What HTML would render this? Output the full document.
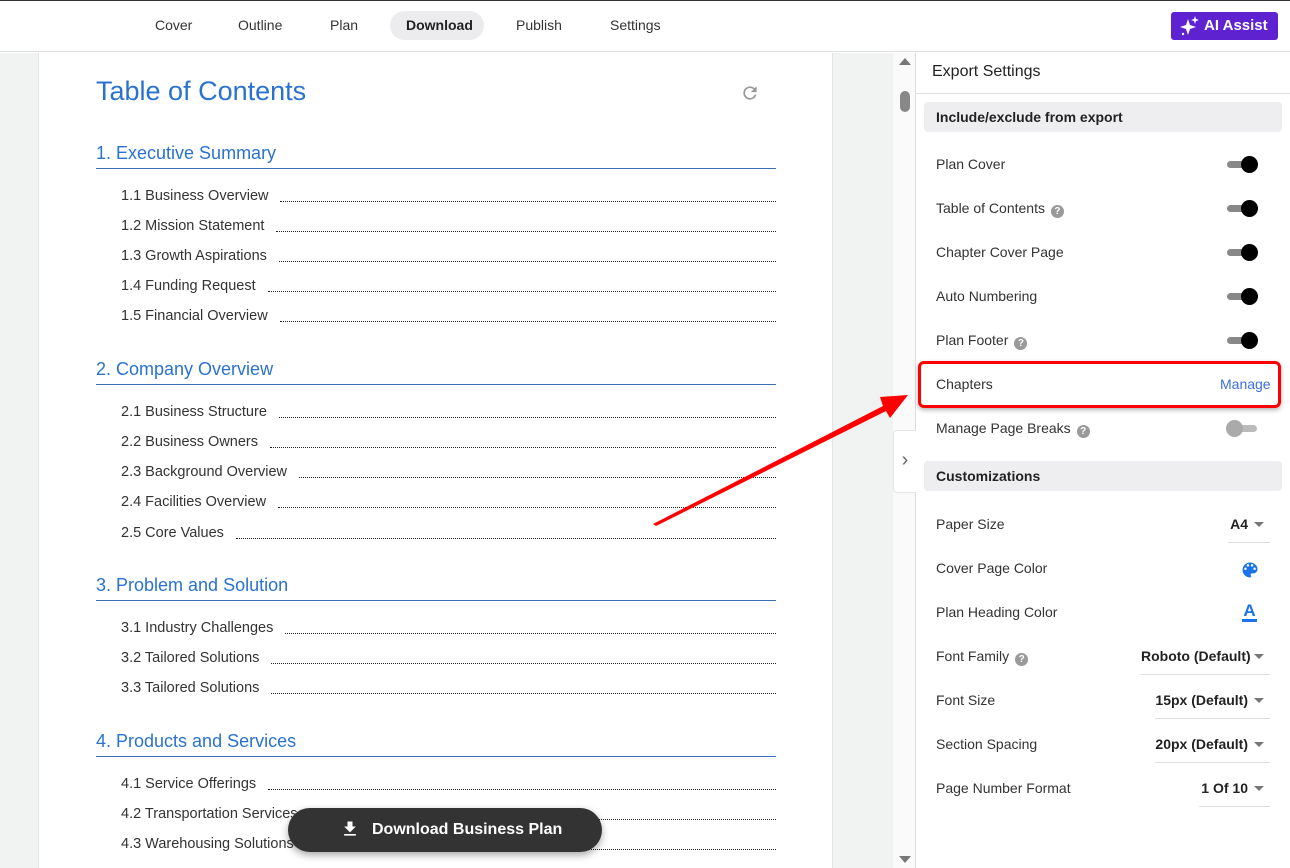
<!DOCTYPE html>
<html><head><meta charset="utf-8"><style>
*{box-sizing:border-box;margin:0;padding:0}
body{width:1290px;height:868px;overflow:hidden;font-family:"Liberation Sans",sans-serif;background:#fff;position:relative;color:#333}
.a{position:absolute}
.top{left:0;top:0;width:1290px;height:52px;border-top:2px solid #444;border-bottom:1px solid #e0e0e0;background:#fff}
.nav{top:14px;font-size:14px;color:#333;line-height:22px}
.h{position:absolute;left:96px;width:680px;color:#2a72d0;font-size:18px;border-bottom:1px solid #3a6fb5;height:24px;line-height:16px}
.it{position:absolute;left:121px;width:655px;display:flex;font-size:14.5px;color:#333;line-height:18px}
.it span{white-space:nowrap;padding-right:12px}
.it i{flex:1;border-bottom:1px dotted #222;height:15px}
.lbl{position:absolute;left:936px;font-size:14px;color:#333;line-height:18px;white-space:nowrap}
.q{display:inline-block;width:13px;height:13px;border-radius:50%;background:#999;color:#fff;font-size:10px;text-align:center;line-height:13px;font-weight:bold;margin-left:6px;vertical-align:-1px}
.tg{position:absolute;left:1227px;width:30px;height:7px;border-radius:4px;background:#888}
.tg b{position:absolute;right:-1px;top:-5px;width:17px;height:17px;border-radius:50%;background:#000}
.sec{position:absolute;left:924px;width:358px;height:30px;background:#eeeef0;border-radius:4px;font-weight:bold;font-size:14px;padding-left:12px;line-height:30px;color:#222}
.sel{position:absolute;right:20px;font-weight:bold;font-size:14px;color:#222;border-bottom:1px solid #ddd;height:28px;line-height:18px;text-align:right;padding-right:22px;white-space:nowrap}
.sel:after{content:"";position:absolute;right:6px;top:7px;border:5px solid transparent;border-top:5px solid #777}
</style></head><body>
<div class="a top" style="border-top:1px solid #333"></div>
<div class="a" style="left:390px;top:11px;width:94px;height:29px;background:#ececee;border-radius:15px"></div>
<div class="a nav" style="left:155px">Cover</div>
<div class="a nav" style="left:238px">Outline</div>
<div class="a nav" style="left:330px">Plan</div>
<div class="a nav" style="left:406px;font-weight:bold;color:#222">Download</div>
<div class="a nav" style="left:516px">Publish</div>
<div class="a nav" style="left:610px">Settings</div>
<div class="a" style="left:1171px;top:12px;width:107px;height:28px;background:#5f22d0;border-radius:3px;color:#fff;font-size:15px;font-weight:bold;line-height:28px;padding-left:33px">AI Assist</div>
<svg class="a" style="left:1180px;top:16px" width="20" height="20" viewBox="0 0 20 20" fill="#fff"><path d="M8 3 L10 9 L16 11 L10 13 L8 19 L6 13 L0 11 L6 9Z"/><path d="M15 0 L16 3 L19 4 L16 5 L15 8 L14 5 L11 4 L14 3Z"/><circle cx="3" cy="18" r="1.2"/></svg>

<div class="a" style="left:0;top:53px;width:39px;height:815px;background:#f1f2f2;border-right:1px solid #e4e4e4"></div>
<div class="a" style="left:832px;top:53px;width:61px;height:815px;background:#f1f2f2;border-left:1px solid #e4e4e4"></div>
<div class="a" style="left:893px;top:53px;width:23px;height:815px;background:#fafafa;border-right:1px solid #ddd"></div>
<div class="a" style="left:899px;top:58px;border:6px solid transparent;border-bottom:7px solid #777;border-top:0"></div>
<div class="a" style="left:900px;top:91px;width:10px;height:21px;background:#888;border-radius:5px"></div>
<div class="a" style="left:899px;top:856px;border:6px solid transparent;border-top:7px solid #777;border-bottom:0"></div>
<div class="a" style="left:893px;top:430px;width:23px;height:63px;background:#fff;border:1px solid #e4e4e4;border-right:0;border-radius:4px 0 0 4px;color:#666;font-size:20px;line-height:58px;text-align:center">›</div>

<div class="a" style="left:96px;top:76px;font-size:27px;color:#2a72d0">Table of Contents</div>
<svg class="a" style="left:740px;top:83px" width="20" height="20" viewBox="0 0 24 24"><path fill="#999" d="M17.65 6.35A7.96 7.96 0 0 0 12 4a8 8 0 1 0 7.73 10h-2.08A6 6 0 1 1 12 6c1.66 0 3.14.69 4.22 1.78L13 11h7V4z"/></svg>

<div class="h" style="top:145px">1. Executive Summary</div>
<div class="it" style="top:187px"><span>1.1 Business Overview</span><i></i></div>
<div class="it" style="top:217px"><span>1.2 Mission Statement</span><i></i></div>
<div class="it" style="top:247px"><span>1.3 Growth Aspirations</span><i></i></div>
<div class="it" style="top:277px"><span>1.4 Funding Request</span><i></i></div>
<div class="it" style="top:307px"><span>1.5 Financial Overview</span><i></i></div>
<div class="h" style="top:361px">2. Company Overview</div>
<div class="it" style="top:403px"><span>2.1 Business Structure</span><i></i></div>
<div class="it" style="top:433px"><span>2.2 Business Owners</span><i></i></div>
<div class="it" style="top:463px"><span>2.3 Background Overview</span><i></i></div>
<div class="it" style="top:493px"><span>2.4 Facilities Overview</span><i></i></div>
<div class="it" style="top:524px"><span>2.5 Core Values</span><i></i></div>
<div class="h" style="top:577px">3. Problem and Solution</div>
<div class="it" style="top:619px"><span>3.1 Industry Challenges</span><i></i></div>
<div class="it" style="top:649px"><span>3.2 Tailored Solutions</span><i></i></div>
<div class="it" style="top:679px"><span>3.3 Tailored Solutions</span><i></i></div>
<div class="h" style="top:733px">4. Products and Services</div>
<div class="it" style="top:775px"><span>4.1 Service Offerings</span><i></i></div>
<div class="it" style="top:805px"><span>4.2 Transportation Services</span><i></i></div>
<div class="it" style="top:835px"><span>4.3 Warehousing Solutions</span><i></i></div>

<div class="a" style="left:288px;top:808px;width:314px;height:44px;background:#333;border-radius:22px;box-shadow:0 3px 8px rgba(0,0,0,.35);color:#fff;font-weight:bold;font-size:16px;line-height:44px;padding-left:84px">Download Business Plan</div>
<svg class="a" style="left:340px;top:819px" width="20" height="20" viewBox="0 0 24 24"><path fill="#fff" d="M19 9h-4V3H9v6H5l7 7 7-7zM5 18v2h14v-2z"/></svg>

<div class="a" style="left:932px;top:63px;font-size:16px;color:#222">Export Settings</div>
<div class="a" style="left:916px;top:93px;width:374px;border-top:1px solid #e0e0e0"></div>
<div class="sec" style="top:102px">Include/exclude from export</div>
<div class="lbl" style="top:155px">Plan Cover</div><div class="tg" style="top:161px"><b></b></div>
<div class="lbl" style="top:199px">Table of Contents<span class="q">?</span></div><div class="tg" style="top:205px"><b></b></div>
<div class="lbl" style="top:243px">Chapter Cover Page</div><div class="tg" style="top:249px"><b></b></div>
<div class="lbl" style="top:287px">Auto Numbering</div><div class="tg" style="top:293px"><b></b></div>
<div class="lbl" style="top:331px">Plan Footer<span class="q">?</span></div><div class="tg" style="top:337px"><b></b></div>
<div class="a" style="left:918px;top:361px;width:363px;height:47px;border:3px solid #f00;border-radius:6px;box-shadow:0 2px 5px rgba(0,0,0,.3)"></div>
<div class="lbl" style="top:375px">Chapters</div>
<div class="a" style="left:1220px;top:375px;font-size:14px;color:#3a6fe0;line-height:18px">Manage</div>
<div class="lbl" style="top:419px">Manage Page Breaks<span class="q">?</span></div>
<div class="tg" style="top:425px;background:#bbb"><b style="background:#aaa;right:auto;left:-1px"></b></div>
<div class="sec" style="top:461px">Customizations</div>
<div class="lbl" style="top:515px">Paper Size</div><div class="sel" style="top:515px;width:42px">A4</div>
<div class="lbl" style="top:559px">Cover Page Color</div>
<svg class="a" style="left:1240px;top:560px" width="20" height="20" viewBox="0 0 24 24"><path fill="#1a73e8" d="M12 3a9 9 0 0 0 0 18c.83 0 1.5-.67 1.5-1.5 0-.39-.15-.74-.39-1.01-.23-.26-.38-.61-.38-.99 0-.83.67-1.5 1.5-1.5H16c2.76 0 5-2.24 5-5 0-4.42-4.03-8-9-8zm-5.5 9a1.5 1.5 0 1 1 0-3 1.5 1.5 0 0 1 0 3zm3-4a1.5 1.5 0 1 1 0-3 1.5 1.5 0 0 1 0 3zm5 0a1.5 1.5 0 1 1 0-3 1.5 1.5 0 0 1 0 3zm3 4a1.5 1.5 0 1 1 0-3 1.5 1.5 0 0 1 0 3z"/></svg>
<div class="lbl" style="top:603px">Plan Heading Color</div>
<div class="a" style="left:1242px;top:602px;width:15px;font-size:17px;font-weight:bold;color:#1a73e8;line-height:17px;text-align:center;border-bottom:3px solid #1a73e8">A</div>
<div class="lbl" style="top:647px">Font Family<span class="q">?</span></div><div class="sel" style="top:647px;width:129px">Roboto (Default)</div>
<div class="lbl" style="top:691px">Font Size</div><div class="sel" style="top:691px;width:115px">15px (Default)</div>
<div class="lbl" style="top:735px">Section Spacing</div><div class="sel" style="top:735px;width:115px">20px (Default)</div>
<div class="lbl" style="top:779px">Page Number Format</div><div class="sel" style="top:779px;width:71px">1 Of 10</div>

<svg class="a" style="left:0;top:0" width="1290" height="868"><polygon fill="#f00" points="653,524 883,406 880,397 908,395 890,418 886,411 656,526"/></svg>
</body></html>
